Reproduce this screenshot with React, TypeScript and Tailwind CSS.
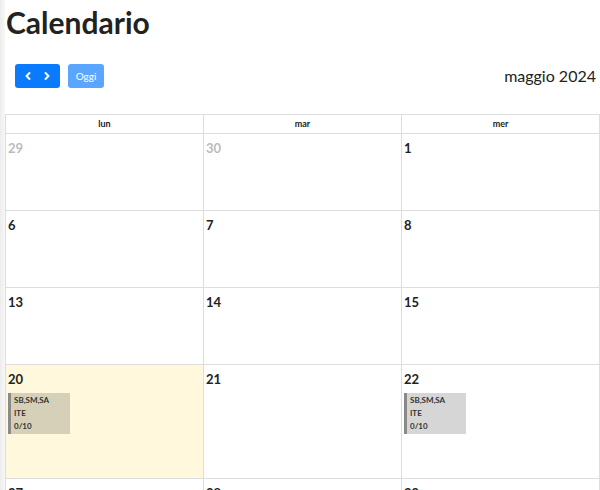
import React from 'react';

type Day = { n: number; muted?: boolean; today?: boolean; event?: boolean };

// only the first three weekday columns fit in the visible area
const weeks: Day[][] = [
  [{ n: 29, muted: true }, { n: 30, muted: true }, { n: 1 }],
  [{ n: 6 }, { n: 7 }, { n: 8 }],
  [{ n: 13 }, { n: 14 }, { n: 15 }],
  [{ n: 20, today: true, event: true }, { n: 21 }, { n: 22, event: true }],
  [{ n: 27 }, { n: 28 }, { n: 29 }],
];

const dayNames = ['lun', 'mar', 'mer'];

function Event() {
  return (
    <div className="mx-[2px] mt-[6px] w-[62px] border-l-[3px] border-[#8a8a8a] bg-[rgba(0,0,0,0.16)] px-[3px] py-[1px] text-[8px] font-bold leading-[13px] text-[#333]">
      <div>SB,SM,SA</div>
      <div>ITE</div>
      <div>0/10</div>
    </div>
  );
}

export default function App() {
  return (
    <div className="flex h-[490px] w-[600px] overflow-hidden bg-white font-['Lato','Noto_Sans',sans-serif] text-[#212529]">
      <div className="w-[5px] shrink-0 bg-gradient-to-r from-[#ececec] to-[#f8f8f8]" />
      <div className="min-w-0 flex-1">
        <h1 className="ml-[1px] mt-[4px] text-[30px] font-bold leading-[36px] text-[#222]">Calendario</h1>
        <div className="mt-[24px] flex items-center justify-between pl-[10px] pr-[4px]">
          <div className="flex items-center gap-[8px]">
            <div className="flex h-[24px] w-[45px] items-center justify-around rounded-[3px] bg-[#0a7bff] px-[4px] text-white">
              <svg width="10" height="10" viewBox="0 0 10 10" fill="none" stroke="currentColor" strokeWidth="2" strokeLinecap="round" strokeLinejoin="round">
                <path d="M6.5 2 L3.5 5 L6.5 8" />
              </svg>
              <svg width="10" height="10" viewBox="0 0 10 10" fill="none" stroke="currentColor" strokeWidth="2" strokeLinecap="round" strokeLinejoin="round">
                <path d="M3.5 2 L6.5 5 L3.5 8" />
              </svg>
            </div>
            <div className="flex h-[24px] w-[36px] items-center justify-center rounded-[3px] bg-[#5aa6ff] text-[10px] text-white">
              Oggi
            </div>
          </div>
          <div className="text-[16px] leading-[20px] text-[#222]">maggio 2024</div>
        </div>
        <div className="mt-[26px] w-[595px] border-l border-t border-[#dddddd]">
          <div className="grid grid-cols-[repeat(3,198px)]">
            {dayNames.map((d) => (
              <div key={d} className="h-[19px] border-b border-r border-[#dddddd] text-center text-[9px] font-bold leading-[18px] text-[#222]">
                {d}
              </div>
            ))}
          </div>
          {weeks.map((w, i) => (
            <div key={i} className={`grid grid-cols-[repeat(3,198px)] ${i === 3 ? 'h-[114px]' : 'h-[77px]'}`}>
              {w.map((d, j) => (
                <div
                  key={j}
                  className={`border-b border-r border-[#dddddd] pt-[6px] ${d.today ? 'bg-[#fff8dc]' : 'bg-white'}`}
                >
                  <div className={`pl-[2px] text-[13px] font-bold leading-[16px] ${d.muted ? 'text-[#bbbbbb]' : 'text-[#222]'}`}>
                    {d.n}
                  </div>
                  {d.event && <Event />}
                </div>
              ))}
            </div>
          ))}
        </div>
      </div>
    </div>
  );
}
